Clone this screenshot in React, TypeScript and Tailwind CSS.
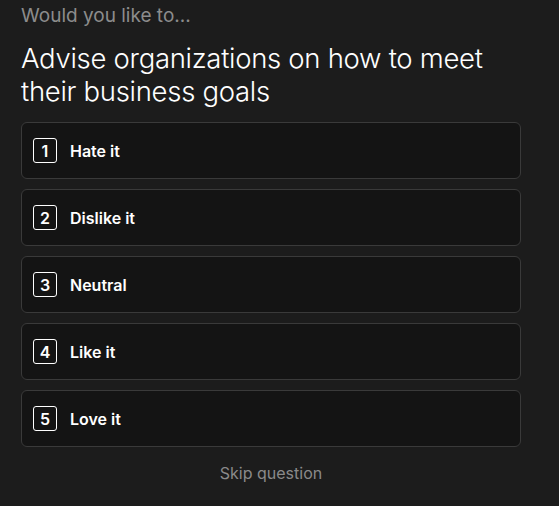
import React from 'react';

const options = ['Hate it', 'Dislike it', 'Neutral', 'Like it', 'Love it'];

const App: React.FC = () => {
  return (
    <div className="min-h-[506px] bg-[#1c1c1c] font-['Inter',sans-serif] px-[21px] pt-[3px]">
      <div className="w-[500px]">
        <p className="text-[19px] leading-[26px] text-[#8c8c8c]">Would you like to...</p>
        <h1 className="mt-[13px] text-[27.5px] leading-[33px] font-light text-white tracking-[-0.3px]">
          Advise organizations on how to meet their business goals
        </h1>

        <div className="mt-[14px] flex flex-col gap-[10px]">
          {options.map((label, i) => (
            <button
              key={label}
              className="flex h-[57px] items-center gap-[13px] rounded-[6px] border border-[#3a3a3a] bg-[#141414] px-[11px] text-left"
            >
              <span className="flex h-[25px] w-[24px] items-center justify-center rounded-[3px] border border-white text-[16px] font-semibold text-white">
                {i + 1}
              </span>
              <span className="text-[16px] font-semibold text-white">{label}</span>
            </button>
          ))}
        </div>

        <div className="mt-[14px] text-center">
          <span className="text-[16px] text-[#8a8a8a]">Skip question</span>
        </div>
      </div>
    </div>
  );
};

export default App;
